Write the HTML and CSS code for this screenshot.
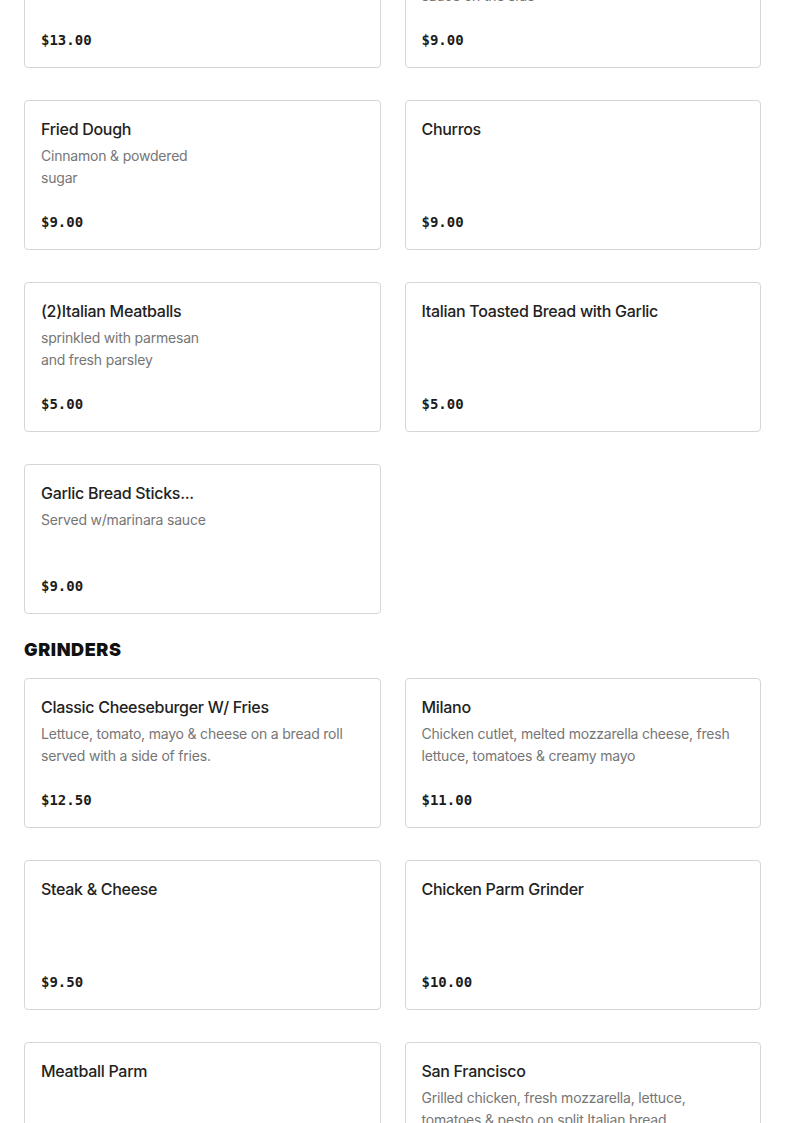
FILE: index.html
```html
<!DOCTYPE html>
<html lang="en">
<head>
<meta charset="utf-8">
<title>Menu</title>
<link rel="stylesheet" href="styles.css">
</head>
<body>
<main class="menu">
  <section class="section section-first">
    <div class="grid">
      <article class="card with-image">
        <h3 class="title">Chicken Wings</h3>
        <p class="desc">Buffalo, BBQ or plain</p>
        <p class="price">$13.00</p>
      </article>
      <article class="card with-image">
        <h3 class="title">Mozzarella Sticks</h3>
        <p class="desc">Served with hot marinara sauce on the side</p>
        <p class="price">$9.00</p>
      </article>
      <article class="card with-image">
        <h3 class="title">Fried Dough</h3>
        <p class="desc">Cinnamon &amp; powdered sugar</p>
        <p class="price">$9.00</p>
      </article>
      <article class="card with-image">
        <h3 class="title">Churros</h3>
        <p class="desc"></p>
        <p class="price">$9.00</p>
      </article>
      <article class="card with-image">
        <h3 class="title">(2)Italian Meatballs</h3>
        <p class="desc">sprinkled with parmesan and fresh parsley</p>
        <p class="price">$5.00</p>
      </article>
      <article class="card with-image">
        <h3 class="title">Italian Toasted Bread with Garlic</h3>
        <p class="desc"></p>
        <p class="price">$5.00</p>
      </article>
      <article class="card with-image">
        <h3 class="title">Garlic Bread Sticks...</h3>
        <p class="desc">Served w/marinara sauce</p>
        <p class="price">$9.00</p>
      </article>
    </div>
  </section>
  <section class="section">
    <h2 class="section-title">GRINDERS</h2>
    <div class="grid">
      <article class="card">
        <h3 class="title">Classic Cheeseburger W/ Fries</h3>
        <p class="desc">Lettuce, tomato, mayo &amp; cheese on a bread roll served with a side of fries.</p>
        <p class="price">$12.50</p>
      </article>
      <article class="card">
        <h3 class="title">Milano</h3>
        <p class="desc">Chicken cutlet, melted mozzarella cheese, fresh lettuce, tomatoes &amp; creamy mayo</p>
        <p class="price">$11.00</p>
      </article>
      <article class="card">
        <h3 class="title">Steak &amp; Cheese</h3>
        <p class="desc"></p>
        <p class="price">$9.50</p>
      </article>
      <article class="card">
        <h3 class="title">Chicken Parm Grinder</h3>
        <p class="desc"></p>
        <p class="price">$10.00</p>
      </article>
      <article class="card">
        <h3 class="title">Meatball Parm</h3>
        <p class="desc"></p>
        <p class="price">$10.00</p>
      </article>
      <article class="card">
        <h3 class="title">San Francisco</h3>
        <p class="desc">Grilled chicken, fresh mozzarella, lettuce, tomatoes &amp; pesto on split Italian bread</p>
        <p class="price">$11.00</p>
      </article>
    </div>
  </section>
</main>
</body>
</html>
```

FILE: styles.css
```css
* { box-sizing: border-box; }

html, body {
  margin: 0;
  padding: 0;
  background: #ffffff;
}

body {
  font-family: Inter, "Noto Sans", "Liberation Sans", sans-serif;
  color: #222222;
  overflow: hidden;
}

.menu {
  padding: 0 24px;
  margin-top: -82px;
}

.grid {
  display: grid;
  grid-template-columns: 1fr 1fr;
  column-gap: 24px;
  row-gap: 32px;
}

.section-title {
  margin: 25px 0 17px;
  font-size: 18px;
  line-height: 22px;
  font-weight: 900;
  letter-spacing: 0.6px;
  color: #111111;
}

.card {
  height: 150px;
  border: 1px solid #d6d6d6;
  border-radius: 4px;
  padding: 16px;
  display: flex;
  flex-direction: column;
  background: #ffffff;
}

.title {
  margin: 0;
  font-size: 16px;
  line-height: 24px;
  font-weight: 500;
  letter-spacing: -0.3px;
  color: #222222;
  white-space: nowrap;
  overflow: hidden;
  text-overflow: ellipsis;
}

.desc {
  margin: 4px 0 0;
  font-size: 14px;
  line-height: 22px;
  font-weight: 400;
  letter-spacing: -0.2px;
  color: #767676;
  min-height: 44px;
}

.with-image .desc {
  max-width: 185px;
}

.price {
  margin: 22px 0 0;
  font-family: "DejaVu Sans Mono", "Liberation Mono", monospace;
  font-size: 14px;
  line-height: 22px;
  font-weight: 700;
  color: #1c1c1c;
}
```
